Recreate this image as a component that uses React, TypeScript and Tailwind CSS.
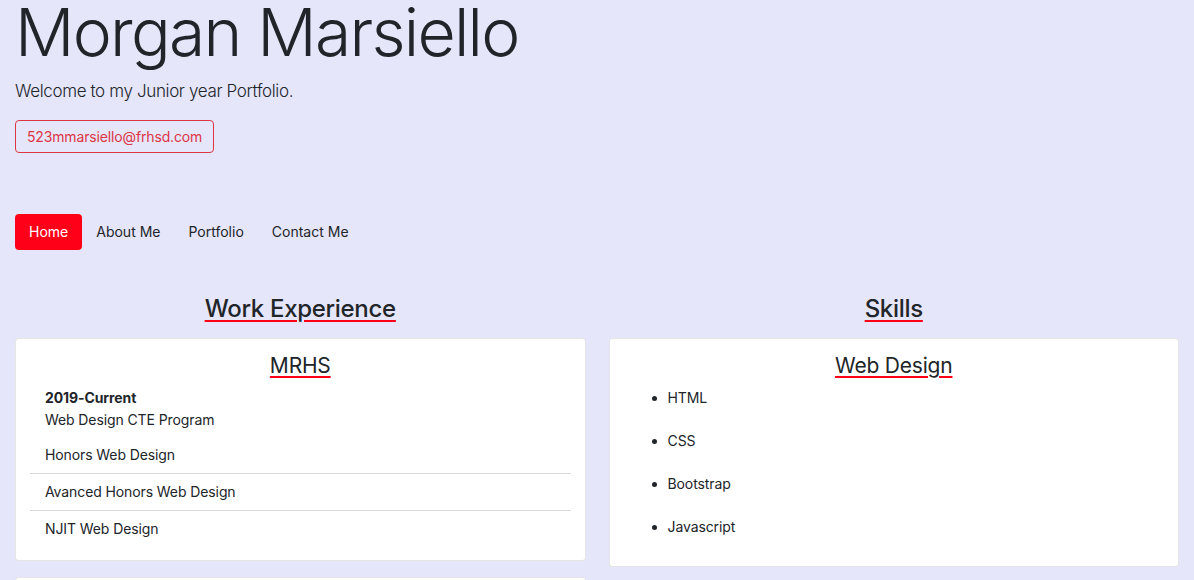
const RED = "#ff0019";

function SectionTitle({ children }: { children: React.ReactNode }) {
  return (
    <h2 className="text-center text-[24px] font-medium leading-[31px] tracking-[-0.3px] underline decoration-[#ff0019] decoration-2 underline-offset-[3px]">
      {children}
    </h2>
  );
}

function CardTitle({ children }: { children: React.ReactNode }) {
  return (
    <h3 className="text-center text-[21px] font-normal leading-[29px] tracking-[-0.2px] underline decoration-[#ff0019] decoration-2 underline-offset-[3px]">
      {children}
    </h3>
  );
}

export default function App() {
  const courses = ["Honors Web Design", "Avanced Honors Web Design", "NJIT Web Design"];
  const skills = ["HTML", "CSS", "Bootstrap", "Javascript"];

  return (
    <div className="min-h-screen bg-[#e6e6fa] text-[#212529] font-['Inter','Noto_Sans',sans-serif]">
      {/* Header */}
      <header className="px-[15px]">
        <h1 className="text-[66px] font-light leading-[64px] tracking-[-1.75px]">Morgan Marsiello</h1>
        <p className="mt-[14px] text-[17px] font-light leading-[27px] tracking-[-0.36px]">Welcome to my Junior year Portfolio.</p>
        <a className="mt-[15px] inline-block rounded-[4px] border border-[#dc3545] px-[11px] py-[5px] text-[14px] leading-[21px] tracking-[-0.15px] text-[#dc3545]">
          523mmarsiello@frhsd.com
        </a>
      </header>

      {/* Nav */}
      <nav className="mt-[61px] flex px-[15px] text-[14px] leading-[20px]">
        <a className="rounded-[4px] px-[14px] py-2 text-white" style={{ backgroundColor: RED }}>Home</a>
        <a className="px-[14px] py-2">About Me</a>
        <a className="px-[14px] py-2">Portfolio</a>
        <a className="px-[14px] py-2">Contact Me</a>
      </nav>

      {/* Columns */}
      <div className="mt-[43px] grid grid-cols-2 gap-x-[23px] px-[15px]">
        <div>
          <SectionTitle>Work Experience</SectionTitle>
          <div className="mt-[14px] rounded-[4px] border border-black/10 bg-white px-[14px] pt-[12px] pb-[13px]">
            <CardTitle>MRHS</CardTitle>
            <div className="mt-[7px] px-[15px] text-[14px] leading-[21px] tracking-[-0.1px]">
              <h4 className="font-bold">2019-Current</h4>
              <p className="mt-[1px]">Web Design CTE Program</p>
            </div>
            <ul className="mt-[7px] text-[14px] leading-[20px] tracking-[-0.1px]">
              {courses.map((c, i) => (
                <li key={c} className={`px-[15px] py-2 ${i > 0 ? "border-t border-black/15" : ""}`}>
                  {c}
                </li>
              ))}
            </ul>
          </div>
          <div className="mt-[16px] h-[40px] rounded-[4px] border border-black/10 bg-white" />
        </div>

        <div>
          <SectionTitle>Skills</SectionTitle>
          <div className="mt-[14px] rounded-[4px] border border-black/10 bg-white px-[14px] pt-[12px] pb-[15px]">
            <CardTitle>Web Design</CardTitle>
            <ul className="mt-[7px] mb-[14px] flex list-disc flex-col gap-[22px] pl-[44px] text-[14px] leading-[21px] tracking-[-0.1px]">
              {skills.map((s) => (
                <li key={s}>{s}</li>
              ))}
            </ul>
          </div>
        </div>
      </div>
    </div>
  );
}
